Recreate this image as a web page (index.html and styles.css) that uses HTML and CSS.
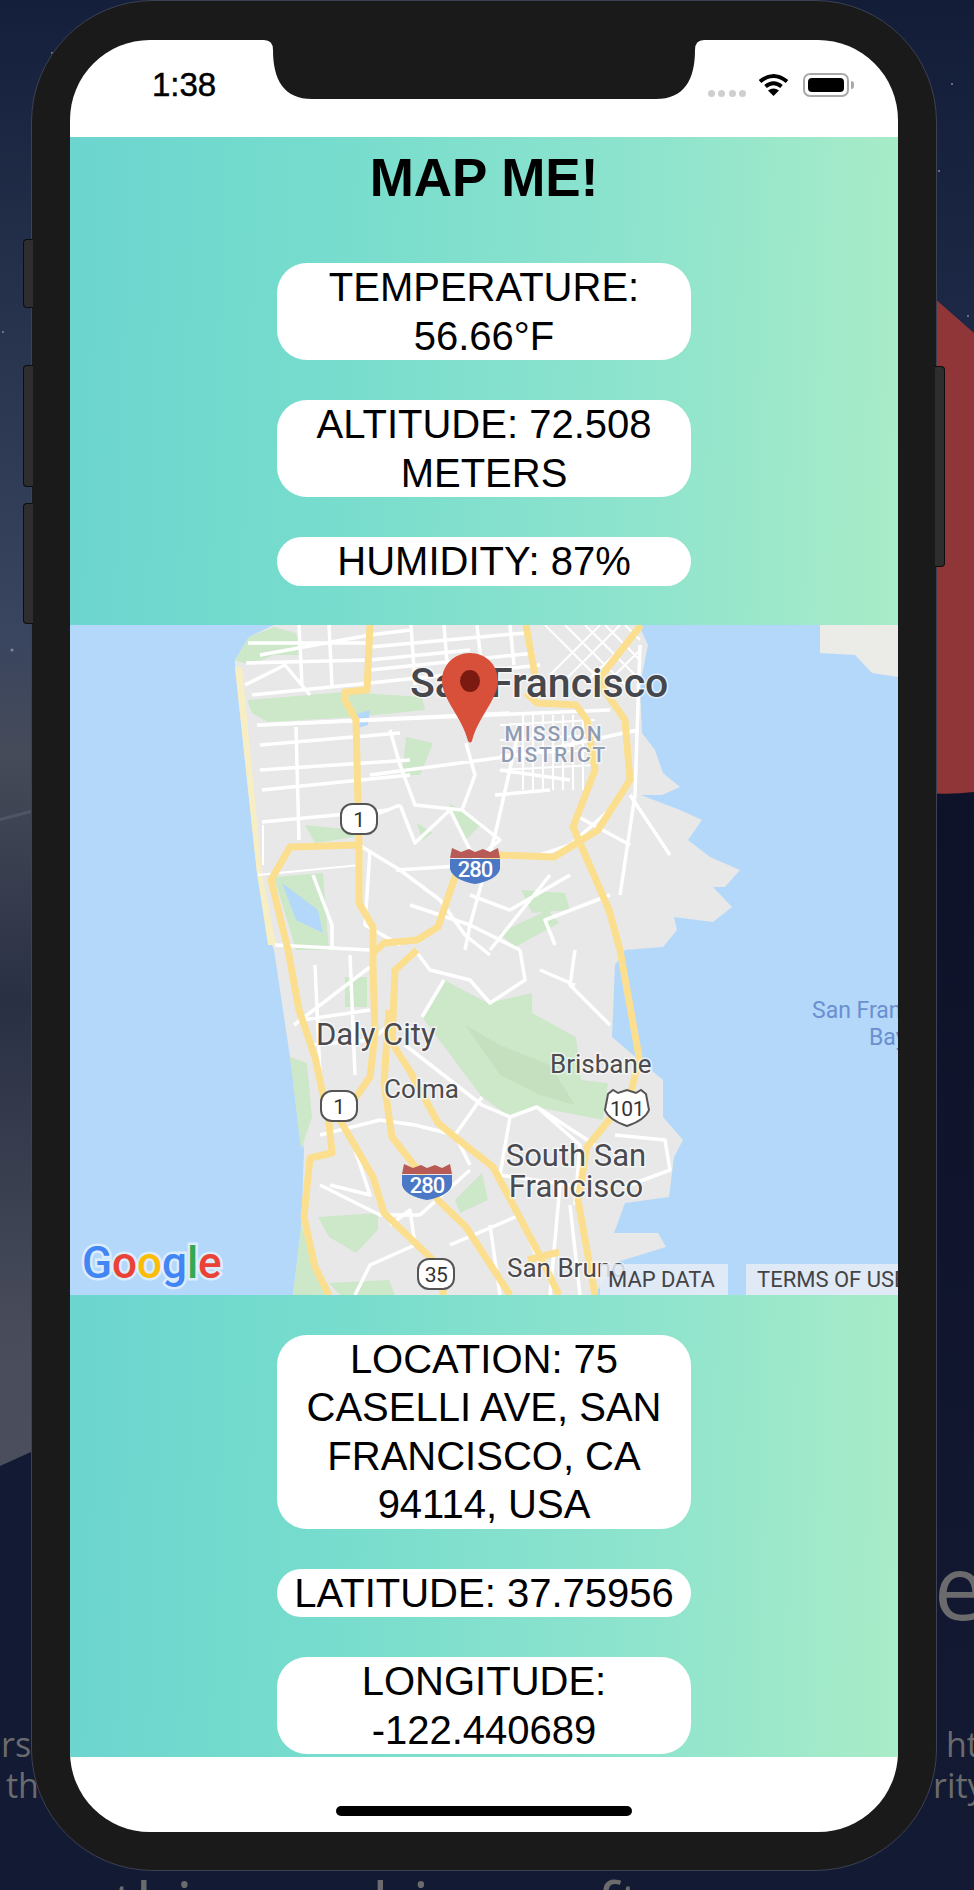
FILE: index.html
```html
<!DOCTYPE html>
<html lang="en">
<head>
	<meta charset="utf-8" />
	<title>Map Me</title>
	<link rel="stylesheet" href="styles.css">
</head>
<body>
	<!-- desktop wallpaper behind the simulator -->
	<svg class="wallpaper" viewBox="0 0 974 1890" width="974" height="1890">
		<defs>
			<linearGradient id="sky" x1="0" y1="0" x2="0" y2="1">
				<stop offset="0" stop-color="#141f3b" />
				<stop offset="0.34" stop-color="#3a455f" />
				<stop offset="0.4" stop-color="#464b59" />
				<stop offset="0.53" stop-color="#2a3044" />
				<stop offset="0.72" stop-color="#4a4e5c" />
				<stop offset="1" stop-color="#4e515e" />
			</linearGradient>
			<linearGradient id="sky-right" x1="0" y1="0" x2="0" y2="1">
				<stop offset="0" stop-color="#131d38" />
				<stop offset="0.17" stop-color="#1c2845" />
				<stop offset="0.43" stop-color="#0e1229" />
				<stop offset="1" stop-color="#131a33" />
			</linearGradient>
		</defs>
		<rect x="0" y="0" width="487" height="1890" fill="url(#sky)" />
		<rect x="487" y="0" width="487" height="1890" fill="url(#sky-right)" />
		<path class="night" d="M0 1466 L31 1452 H487 V1890 H0 Z" />
		<path class="red-shape" d="M925 290 L974 333 V792 Q950 795 925 793 Z" />
		<path class="dune" d="M0 818 L31 810 V813 L0 821 Z" />
		<circle class="star" cx="3" cy="332" r="1" />
		<circle class="star" cx="52" cy="53" r="1" />
		<circle class="star" cx="952" cy="84" r="1" />
		<circle class="star" cx="939" cy="171" r="1" />
		<circle class="star" cx="968" cy="316" r="1" />
		<circle class="star" cx="12" cy="650" r="1.5" />
		<text class="wall-big" x="934" y="1620">e</text>
		<text class="wall-small" x="-18" y="1757">ers</text>
		<text class="wall-small" x="6" y="1798">th</text>
		<text class="wall-small" x="946" y="1757">ht</text>
		<text class="wall-small" x="933" y="1798">rity</text>
		<text class="wall-big wall-bottom" x="112" y="1930">thi</text>
		<text class="wall-big wall-bottom" x="372" y="1930">hi</text>
		<text class="wall-big wall-bottom" x="596" y="1930">ft</text>
	</svg>

	<div class="phone">
		<div class="side-btn side-mute"></div>
		<div class="side-btn side-up"></div>
		<div class="side-btn side-down"></div>
		<div class="side-btn side-power"></div>

		<svg class="notch" viewBox="0 0 440 60" width="440" height="60">
			<path d="M0 0 H440 Q431 0 431 10 C431 40 420 59 392 59 H48 C20 59 9 40 9 10 Q9 0 0 0 Z" />
		</svg>

		<div class="screen">
			<div class="status-bar">
				<span class="clock">1:38</span>
				<div class="status-icons">
					<div class="signal"><i></i><i></i><i></i><i></i></div>
					<svg class="wifi" viewBox="0 0 31 23" width="31" height="23">
						<path class="wifi-arc" d="M2 8.5 Q15.5 -2.5 29 8.5" />
						<path class="wifi-arc" d="M7.5 13.5 Q15.5 7 23.500 13.5" />
						<path d="M15.500 23 L10 17.500 Q15.500 13.500 21 17.500 Z" />
					</svg>
					<div class="battery"><div class="battery-level"></div></div>
					<div class="battery-nub"></div>
				</div>
			</div>

			<div class="panel panel-top">
				<h1 class="title">MAP ME!</h1>
				<div class="pill">TEMPERATURE: 56.66°F</div>
				<div class="pill">ALTITUDE: 72.508 METERS</div>
				<div class="pill">HUMIDITY: 87%</div>
			</div>

			<div class="map">
				<svg class="map-svg" viewBox="0 0 828 670" width="828" height="670">
					<!-- land -->
					<path class="land" d="M165 42 L165 35 L179 12 L204 0 L571 0 L571 5 L578 20 L570 60 L572 108 L585 125 L593 148 L610 162 L592 170 L571 170 L610 185 L632 195 L618 215 L640 232 L670 245 L655 262 L643 262 L662 282 L643 297 L604 292 L607 305 L593 322 L555 325 L545 340 L542 412 L575 440 L593 455 L593 492 L613 515 L604 532 L599 572 L555 578 L544 608 L588 608 L596 622 L544 638 L525 670 L223 670 L231 612 L234 525 L220 432 L204 325 L201 318 L187 248 Z" />
					<path class="land-far" d="M750 0 H828 V52 L802 48 L785 30 L750 28 Z" />
					<path class="sand" d="M165 42 L172 42 L192 248 L206 320 L198 320 L187 248 Z" />

					<!-- parks -->
					<path class="park" d="M165 35 L179 12 L204 2 L226 8 L231 30 L204 30 L180 40 Z" />
					<path class="park" d="M177 75 L275 67 L352 72 L355 85 L286 92 L198 97 L182 88 Z" />
					<path class="park" d="M336 112 L363 118 L350 150 L332 150 Z" />
					<path class="park" d="M379 178 L412 198 L396 215 Z" />
					<path class="park" d="M347 198 L363 208 L352 215 Z" />
					<path class="park" d="M204 252 L253 248 L259 325 L226 325 Z" />
					<path class="park" d="M451 265 L495 268 L500 285 L462 288 Z" />
					<path class="park" d="M429 308 L478 285 L489 298 L445 322 Z" />
					<path class="park" d="M235 200 L285 205 L285 212 L245 218 Z" />
					<path class="park" d="M374 355 L418 378 L462 368 L462 388 L506 412 L511 455 L538 458 L533 495 L467 482 L440 492 L412 472 L352 392 Z" />
					<path class="park-dark" d="M395 400 L430 420 L480 440 L505 480 L470 470 L430 450 Z" />
					<path class="park" d="M275 352 L297 352 L297 382 L275 382 Z" />
					<path class="park" d="M220 432 L231 525 L242 492 L237 438 Z" />
					<path class="park" d="M248 592 L308 588 L308 605 L286 628 L259 612 Z" />
					<path class="park" d="M259 658 L319 655 L325 670 L270 670 Z" />
					<path class="park" d="M385 575 L412 548 L418 575 L390 588 Z" />
					<path class="park" d="M223 670 L231 600 L246 640 L256 670 Z" />
					<path class="water" d="M212 258 L248 285 L253 308 L226 295 Z" />
					<path class="water" d="M283 90 L300 85 L298 100 L288 103 Z" />

					<!-- streets -->
					<path class="road" d="M176 38 L300 35 L400 25 M182 70 L300 58 L470 40 M190 30 L300 10 L340 5 M190 100 L440 88 M190 120 L330 108 M190 145 L340 135 M192 165 L340 150 M192 197 L319 185 M226 102 L229 215 M229 0 L232 60 M259 0 L262 60 M341 0 L345 60 M374 0 L378 50 M407 0 L412 45 M440 0 L444 40 M175 60 L215 40 L240 70 M300 22 L455 8 M300 45 L465 28 M178 18 L300 18" />
					<path class="road" d="M187 100 L540 85 M300 150 L450 130 L568 105 M396 118 L405 150 L392 185 L345 180 L330 140 L320 105 M392 185 L430 215 L405 235 L380 185 L345 218 L330 180 M326 245 L405 240 M289 220 L330 245 L370 275 L395 310 L420 330 M450 100 L425 210 L400 300 L395 325 M570 20 L565 170 L550 270 M480 165 L425 170 M430 145 L500 155 M560 170 L600 230 M505 190 L560 220 M545 180 L500 220 L470 230 M480 250 L420 325 M540 270 L475 295 L485 320 M300 225 L295 300 L330 320 M243 250 L262 300 L262 325 M340 280 L400 300 L450 325 M205 320 L300 325 M330 180 L300 192 M400 270 L440 285 L500 250" />
					<path class="road road-thin" d="M475 0 L530 55 M495 0 L555 60 M515 0 L570 55 M535 0 L570 35 M555 0 L570 15 M480 50 L530 0 M495 55 L550 0 M515 58 L570 5 M535 60 L570 25 M453 90 L453 165 M463 90 L463 165 M473 90 L473 165 M483 90 L483 165 M493 90 L493 165 M503 90 L503 165 M513 90 L513 165 M430 100 L525 95 M430 115 L525 110 M430 130 L525 125 M430 145 L525 140 M188 250 L290 240 M193 200 L193 240" />
					<path class="road" d="M224 400 L300 342 M232 395 L300 385 M240 420 L300 415 L320 400 M245 340 L250 450 M280 330 L285 450 M345 325 L360 345 L400 355 L420 378 L455 355 L450 325 M352 392 L374 355 M335 420 L412 480 L440 492 L467 482 L525 520 M412 472 L385 510 L400 540 M440 492 L430 550 L500 560 M467 482 L510 520 L505 580 M505 325 L500 360 L540 400 M470 345 L505 360 M250 510 L310 495 L345 500 L385 510 M280 510 L300 570 L260 560 M250 560 L310 590 L350 590 L400 545 M320 600 L340 585 L345 620 L300 640 L285 670 M380 620 L450 590 L470 640 M490 560 L480 670 M500 580 L510 670 M420 600 L430 670 M545 510 L595 515 L600 545 L560 560" />

					<!-- highways -->
					<g class="highways">
						<path d="M300 0 L297 65 L275 67 L275 75 L286 95 L289 218 L289 278 L303 302 L303 342 L305 408 L300 452 L270 495 L303 552 L314 588 L363 635 L374 670" />
						<path d="M289 220 L220 222 L201 255 L218 325 L229 385 L245 432 L259 498 L262 528 L240 533 L234 592 L245 642 L259 670" />
						<path d="M456 0 L465 50 M456 68 L467 78 L506 80 L517 95 L525 145 L503 202 L539 285 L550 325 L569 432 L561 468 L517 522 L508 575 L525 670" />
						<path d="M571 0 L528 55 L539 72 L555 95 L560 155 L528 205 L484 232 L429 230 L405 241 L385 252 L368 302 L347 315 L314 318 L303 328" />
						<path d="M347 325 L325 345 L322 418 L341 448 L368 498 L385 512 L423 542 L467 625 L489 670" />
						<path d="M319 385 L314 458 L322 512 L357 557 L368 575 L396 602 L440 670" />
						<path d="M458 635 L489 627" />
					</g>

					<!-- place labels -->
					<text class="label label-city" x="340" y="72">San Francisco</text>
					<text class="label label-district" x="484" y="116">MISSION</text>
					<text class="label label-district" x="484" y="137">DISTRICT</text>
					<text class="label label-town" x="246" y="420">Daly City</text>
					<text class="label label-small" x="314" y="473">Colma</text>
					<text class="label label-small" x="480" y="448">Brisbane</text>
					<text class="label label-town label-mid" x="506" y="541">South San</text>
					<text class="label label-town label-mid" x="506" y="572">Francisco</text>
					<text class="label label-small" x="437" y="652">San Bruno</text>
					<text class="label-water" x="742" y="393">San Fran</text>
					<text class="label-water" x="799" y="420">Bay</text>

					<!-- route shields -->
					<g class="shield" transform="translate(289 194)">
						<rect x="-18" y="-15" width="36" height="30" rx="11" /><text y="8">1</text>
					</g>
					<g class="shield" transform="translate(269 481)">
						<rect x="-18" y="-15" width="36" height="30" rx="11" /><text y="8">1</text>
					</g>
					<g class="shield" transform="translate(366 649)">
						<rect x="-18" y="-15" width="36" height="30" rx="11" /><text y="8">35</text>
					</g>
					<g class="shield" transform="translate(557 483)">
						<path d="M-19 -14 L-14 -18 L-9 -15 L0 -18 L9 -15 L14 -18 L19 -14 L22 2 Q18 12 0 18 Q-18 12 -22 2 Z" /><text y="8">101</text>
					</g>
					<g class="interstate" transform="translate(405 241)">
						<path class="i-blue" d="M-25 -7 H25 V3 Q22 14 0 18 Q-22 14 -25 3 Z" />
						<path class="i-red" d="M-23 -18 L-14 -14 L-6 -17 L0 -14 L8 -17 L15 -14 L23 -18 L25 -8 H-25 Z" />
						<text y="11">280</text>
					</g>
					<g class="interstate" transform="translate(357 557)">
						<path class="i-blue" d="M-25 -7 H25 V3 Q22 14 0 18 Q-22 14 -25 3 Z" />
						<path class="i-red" d="M-23 -18 L-14 -14 L-6 -17 L0 -14 L8 -17 L15 -14 L23 -18 L25 -8 H-25 Z" />
						<text y="11">280</text>
					</g>

					<!-- pin -->
					<path class="pin" d="M400 28 C416 28 428 40 428 56 C428 74 408 92 402 116 Q400 119 398 116 C392 92 372 74 372 56 C372 40 384 28 400 28 Z" />
					<ellipse class="pin-dot" cx="400" cy="56" rx="10" ry="11" />

					<text class="google" x="12" y="653"><tspan fill="#4285f4">G</tspan><tspan fill="#ea4335">o</tspan><tspan fill="#fbbc05">o</tspan><tspan fill="#4285f4">g</tspan><tspan fill="#34a853">l</tspan><tspan fill="#ea4335">e</tspan></text>
				</svg>
				<div class="attribution">
					<span class="attr-item attr-data">MAP DATA</span>
					<span class="attr-item attr-terms">TERMS OF USE</span>
				</div>
			</div>

			<div class="panel panel-bottom">
				<div class="pill">LOCATION: 75 CASELLI AVE, SAN FRANCISCO, CA 94114, USA</div>
				<div class="pill">LATITUDE: 37.75956</div>
				<div class="pill">LONGITUDE: -122.440689</div>
			</div>

			<div class="home-area"><div class="home-bar"></div></div>
		</div>
	</div>
</body>
</html>
```

FILE: styles.css
```css
html, body {
	margin: 0;
	padding: 0;
}
body {
	width: 974px;
	height: 1890px;
	overflow: hidden;
	position: relative;
	background: #131a33;
	font-family: "Liberation Sans", Arial, sans-serif;
}

/* wallpaper */
.wallpaper {
	position: absolute;
	left: 0;
	top: 0;
}
.night { fill: #131a33; }
.red-shape { fill: #913638; }
.dune { fill: rgba(150, 155, 170, 0.2); }
.star { fill: #7f889e; }
.wall-big {
	font-family: "Open Sans", sans-serif;
	font-size: 90px;
	fill: #6b6b6d;
}
.wall-bottom { font-size: 66px; }
.wall-small {
	font-family: "Open Sans", sans-serif;
	font-size: 34px;
	fill: #6b6b6d;
}

/* device */
.phone {
	position: absolute;
	left: 31px;
	top: 0;
	width: 906px;
	height: 1871px;
	box-sizing: border-box;
	padding: 39px 38px 38px;
	background: #1a1a1a;
	border: 1px solid #3c4154;
	border-radius: 122px;
}
.side-btn {
	position: absolute;
	width: 10px;
	background: #2e2e2e;
	border: 1px solid #0e0e0e;
	box-sizing: border-box;
}
.side-mute, .side-up, .side-down {
	left: -9px;
	border-radius: 4px 0 0 4px;
	border-right: 0;
}
.side-mute { top: 238px; height: 69px; }
.side-up { top: 364px; height: 122px; }
.side-down { top: 502px; height: 121px; }
.side-power {
	right: -9px;
	top: 365px;
	height: 201px;
	border-radius: 0 4px 4px 0;
	border-left: 0;
}
.notch {
	position: absolute;
	left: 232px;
	top: 39px;
	z-index: 2;
	fill: #1a1a1a;
}
.screen {
	width: 828px;
	height: 1792px;
	display: flex;
	flex-direction: column;
	overflow: hidden;
	background: #fff;
	border-radius: 80px;
}

/* status bar */
.status-bar {
	height: 97px;
	flex-shrink: 0;
	display: flex;
	justify-content: space-between;
	box-sizing: border-box;
	padding: 26px 44px 0 82px;
}
.clock {
	font-size: 33px;
	line-height: 38px;
	color: #000;
	-webkit-text-stroke: 0.5px #000;
}
.status-icons {
	display: flex;
	align-items: flex-start;
	margin-top: 7px;
}
.signal {
	display: flex;
	gap: 3.5px;
	margin-top: 17px;
	margin-right: 12px;
}
.signal i {
	display: block;
	width: 7px;
	height: 7px;
	border-radius: 50%;
	background: #cfcfcf;
}
.wifi { margin-right: 14px; }
.wifi-arc {
	fill: none;
	stroke: #000;
	stroke-width: 4;
}
.battery {
	width: 46px;
	height: 24px;
	box-sizing: border-box;
	padding: 3px;
	border: 2px solid #a9a9a9;
	border-radius: 7px;
}
.battery-level {
	height: 100%;
	background: #000;
	border-radius: 4px;
}
.battery-nub {
	width: 3px;
	height: 8px;
	margin: 8px 0 0 2px;
	background: #a9a9a9;
	border-radius: 0 3px 3px 0;
}

/* panels */
.panel {
	flex-shrink: 0;
	display: flex;
	flex-direction: column;
	align-items: center;
	gap: 40px;
	background: linear-gradient(92deg, #6cd5cf 0%, #76dccd 30%, #8fe4cd 70%, #a9ecc8 100%);
}
.panel-top { padding-bottom: 39px; }
.panel-bottom { padding: 40px 0 3px; }
.title {
	margin: 0;
	height: 86px;
	font-size: 53px;
	line-height: 81px;
	font-weight: bold;
	color: #000;
}
.pill {
	width: 414px;
	box-sizing: border-box;
	padding: 0 12px;
	background: #fff;
	border-radius: 30px;
	font-size: 40px;
	line-height: 48.500px;
	text-align: center;
	color: #000;
}

/* map */
.map {
	position: relative;
	height: 670px;
	flex-shrink: 0;
	overflow: hidden;
	background: #b3d8fa;
}
.map-svg { display: block; }
.land { fill: #e8e8e8; }
.land-far { fill: #ebebe7; }
.sand { fill: #f7eec4; }
.park { fill: #cde8c9; }
.park-dark { fill: #c4e0bf; }
.water { fill: #b3d8fa; }
.road {
	fill: none;
	stroke: #fff;
	stroke-width: 3.500;
	stroke-linejoin: round;
}
.road-thin { stroke-width: 2; }
.highways path {
	fill: none;
	stroke: #fbdf8e;
	stroke-width: 7;
	stroke-linejoin: round;
}
.label {
	font-family: Roboto, sans-serif;
	fill: #4a4a4f;
	paint-order: stroke;
	stroke: rgba(255, 255, 255, 0.6);
	stroke-width: 3px;
}
.label-city {
	font-size: 41px;
	font-weight: 500;
	fill: #45474d;
}
.label-district {
	font-size: 21px;
	font-weight: 500;
	letter-spacing: 2px;
	text-anchor: middle;
	fill: #8f9bb3;
}
.label-town { font-size: 31px; }
.label-mid { text-anchor: middle; }
.label-small { font-size: 26px; }
.label-water {
	font-family: Roboto, sans-serif;
	font-size: 23px;
	fill: #6b8fd0;
}
.shield rect, .shield path {
	fill: #fff;
	stroke: #555;
	stroke-width: 2;
}
.shield text {
	font-family: Roboto, sans-serif;
	font-size: 21px;
	letter-spacing: -0.5px;
	text-anchor: middle;
	fill: #333;
}
.i-blue { fill: #4a78c4; }
.i-red { fill: #b85a55; }
.interstate text {
	font-family: Roboto, sans-serif;
	font-size: 22px;
	font-weight: 500;
	letter-spacing: -1px;
	text-anchor: middle;
	fill: #fff;
}
.pin { fill: #d9503a; }
.pin-dot { fill: #7a1a10; }
.google {
	font-family: Roboto, sans-serif;
	font-size: 44px;
	font-weight: 500;
	paint-order: stroke;
	stroke: rgba(255, 255, 255, 0.55);
	stroke-width: 5px;
}
.attribution {
	position: absolute;
	left: 530px;
	bottom: 0;
	display: flex;
	gap: 18px;
	white-space: nowrap;
}
.attr-item {
	height: 31px;
	box-sizing: border-box;
	padding-left: 11px;
	font-family: Roboto, sans-serif;
	font-size: 22px;
	line-height: 31px;
	color: #444;
	background: rgba(232, 236, 245, 0.85);
}
.attr-data { width: 128px; padding-left: 8px; }
.attr-terms { width: 152px; overflow: hidden; }

/* home indicator */
.home-area {
	flex: 1;
	display: flex;
	justify-content: center;
	padding-top: 49px;
}
.home-bar {
	width: 296px;
	height: 10px;
	background: #000;
	border-radius: 5px;
}
```
